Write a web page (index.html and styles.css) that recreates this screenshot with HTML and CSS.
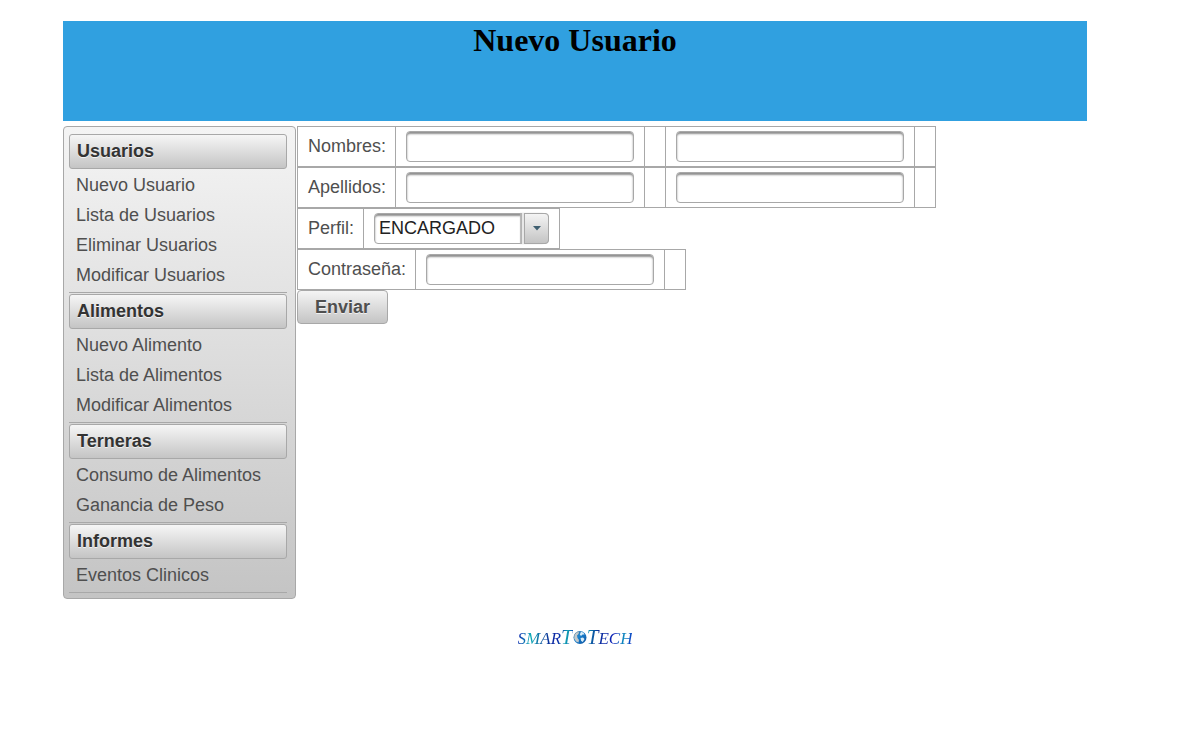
FILE: index.html
```html
<!DOCTYPE html>
<html lang="es">
<head>
<meta charset="utf-8">
<title>Nuevo Usuario</title>
<link rel="stylesheet" href="styles.css">
</head>
<body>
<div class="page">
  <header class="banner"><h1>Nuevo Usuario</h1></header>
  <div class="columns">
    <nav class="menu">
      <section>
        <h3>Usuarios</h3>
        <ul>
          <li><a href="#">Nuevo Usuario</a></li>
          <li><a href="#">Lista de Usuarios</a></li>
          <li><a href="#">Eliminar Usuarios</a></li>
          <li><a href="#">Modificar Usuarios</a></li>
        </ul>
      </section>
      <section>
        <h3>Alimentos</h3>
        <ul>
          <li><a href="#">Nuevo Alimento</a></li>
          <li><a href="#">Lista de Alimentos</a></li>
          <li><a href="#">Modificar Alimentos</a></li>
        </ul>
      </section>
      <section>
        <h3>Terneras</h3>
        <ul>
          <li><a href="#">Consumo de Alimentos</a></li>
          <li><a href="#">Ganancia de Peso</a></li>
        </ul>
      </section>
      <section>
        <h3>Informes</h3>
        <ul>
          <li><a href="#">Eventos Clinicos</a></li>
        </ul>
      </section>
    </nav>
    <form class="form">
      <div class="row">
        <div class="cell"><label for="nombre1">Nombres:</label></div>
        <div class="cell"><input class="field" id="nombre1" type="text"></div>
        <div class="cell"></div>
        <div class="cell"><input class="field" type="text" aria-label="Segundo nombre"></div>
        <div class="cell"></div>
      </div>
      <div class="row">
        <div class="cell"><label for="apellido1">Apellidos:</label></div>
        <div class="cell"><input class="field" id="apellido1" type="text"></div>
        <div class="cell"></div>
        <div class="cell"><input class="field" type="text" aria-label="Segundo apellido"></div>
        <div class="cell"></div>
      </div>
      <div class="row">
        <div class="cell"><label for="perfil">Perfil:</label></div>
        <div class="cell">
          <div class="picker">
            <select id="perfil"><option>ENCARGADO</option></select>
            <span class="trigger"><svg width="8" height="5" viewBox="0 0 8 5"><path d="M0 0h8L4 4.500z" fill="#3f5f70"/></svg></span>
          </div>
        </div>
      </div>
      <div class="row">
        <div class="cell"><label for="clave">Contraseña:</label></div>
        <div class="cell"><input class="field" id="clave" type="password"></div>
        <div class="cell"></div>
      </div>
      <button class="send" type="button">Enviar</button>
    </form>
  </div>
  <footer class="footer">
    <div class="brand">
      <span class="word"><small>SMAR</small>T</span>
      <svg class="globe" width="14" height="15" viewBox="0 0 14 15">
        <defs><linearGradient id="sea" x1="0" y1="0" x2="1" y2="1"><stop offset="0" stop-color="#5b6e7c"/><stop offset=".4" stop-color="#1b84d0"/><stop offset="1" stop-color="#0a4f9e"/></linearGradient></defs>
        <circle cx="7" cy="7.500" r="6.500" fill="url(#sea)"/>
        <path d="M1.500 5 3.500 2.500 6 2 5.500 4 4 5.500 4.500 8 6 10 5.500 12.500 3 11.500 1.200 8.500z" fill="#c3c9cc"/>
        <path d="M8 1.800 10.500 2.800 11.500 4.500 9.500 4.500 8 6 6.800 4.500zM7.500 8 10 7.500 11.500 9 9.800 12 8.200 11z" fill="#d8ecf7"/>
      </svg>
      <span class="word">T<small>ECH</small></span>
    </div>
  </footer>
</div>
</body>
</html>
```
FILE: styles.css
```css
* { box-sizing: border-box; }

body {
  margin: 0;
  background: #fff;
  color: #4f4f4f;
  font: 18px/22px "Liberation Sans", Arial, sans-serif;
}

.page { padding: 21px 105px 0 63px; }

.banner {
  min-height: 100px;
  background: #30a0e0;
  text-align: center;
}

.banner h1 {
  margin: 0;
  color: #000;
  font: bold 32px/38px "Liberation Serif", "Times New Roman", serif;
}

.columns {
  display: flex;
  align-items: flex-start;
  gap: 1px;
  margin-top: 5px;
}

.menu {
  flex: none;
  width: 233px;
  padding: 7px 8px 4px 5px;
  border: 1px solid #a8a8a8;
  border-radius: 4px;
  background: linear-gradient(#f4f4f4, #c4c4c4);
}

.menu section {
  padding-bottom: 1px;
}

.menu h3 {
  margin: 0;
  padding: 0 7px;
  border: 1px solid #a8a8a8;
  border-radius: 3px;
  background: linear-gradient(#f6f6f6, #c4c4c4);
  color: #333;
  font-size: 18px;
  line-height: 33px;
  text-shadow: 0 1px 0 rgba(255, 255, 255, 0.7);
}

.menu ul {
  margin: 0;
  padding: 1px 0 2px;
  border-bottom: 1px solid #a8a8a8;
  list-style: none;
}

.menu a {
  display: block;
  padding: 0 6px;
  color: #4f4f4f;
  line-height: 30px;
  text-decoration: none;
}

.menu a { padding: 0 7px; }

.form {
  display: flex;
  flex-direction: column;
  align-items: flex-start;
}

.row {
  display: flex;
  border: 1px solid #a8a8a8;
}

.cell {
  min-width: 21px;
  padding: 4px 10px;
}

.cell:first-child { padding-right: 9px; }

.cell + .cell { border-left: 1px solid #a8a8a8; }

.cell label {
  display: block;
  line-height: 30px;
}

.field,
.picker {
  display: block;
  height: 31px;
  border: 1px solid #a8a8a8;
  border-radius: 4px;
  background: #fff;
  box-shadow: inset 0 2px 2px #8f8f8f;
}

.field {
  width: 228px;
  padding: 0 4px;
  font: inherit;
}

.picker {
  position: relative;
  width: 175px;
}

.picker select {
  width: 100%;
  height: 100%;
  padding: 0 28px 2px 4px;
  border: 0;
  background: transparent;
  color: #222;
  font: inherit;
  appearance: none;
}

.trigger {
  position: absolute;
  top: -1px;
  right: -1px;
  bottom: -1px;
  display: flex;
  align-items: center;
  justify-content: center;
  width: 25px;
  border: 1px solid #a8a8a8;
  border-radius: 0 4px 4px 0;
  background: linear-gradient(#f4f4f4, #c4c4c4);
  box-shadow: -2px 0 0 #e8e8e8, -4px 0 1px #b4b4b4;
  pointer-events: none;
}

.send {
  height: 34px;
  padding: 0 17px;
  border: 1px solid #a8a8a8;
  border-radius: 4px;
  background: linear-gradient(#f4f4f4, #c4c4c4);
  color: #4f4f4f;
  font: bold 18px/22px "Liberation Sans", Arial, sans-serif;
  text-shadow: 0 1px 0 rgba(255, 255, 255, 0.7);
}

.footer {
  display: flex;
  justify-content: center;
  padding: 26px 0;
}

.brand {
  display: flex;
  align-items: flex-start;
}

.globe { margin-top: 5px; }

.word {
  background: linear-gradient(100deg, #0d2fb0 5%, #10b0b8 25%, #0a3f98 50%, #0a1fa8 70%, #10a0b0 85%, #0a1fc8);
  background-clip: text;
  color: transparent;
  font: italic 21px/24px "Liberation Serif", "Times New Roman", serif;
}

.word + .globe + .word {
  background-image: linear-gradient(100deg, #10a8b8, #0a2f98 25%, #0a1fb8 60%, #1090c0 80%, #0a1fc8);
}

.word small { font-size: 17px; }
```
